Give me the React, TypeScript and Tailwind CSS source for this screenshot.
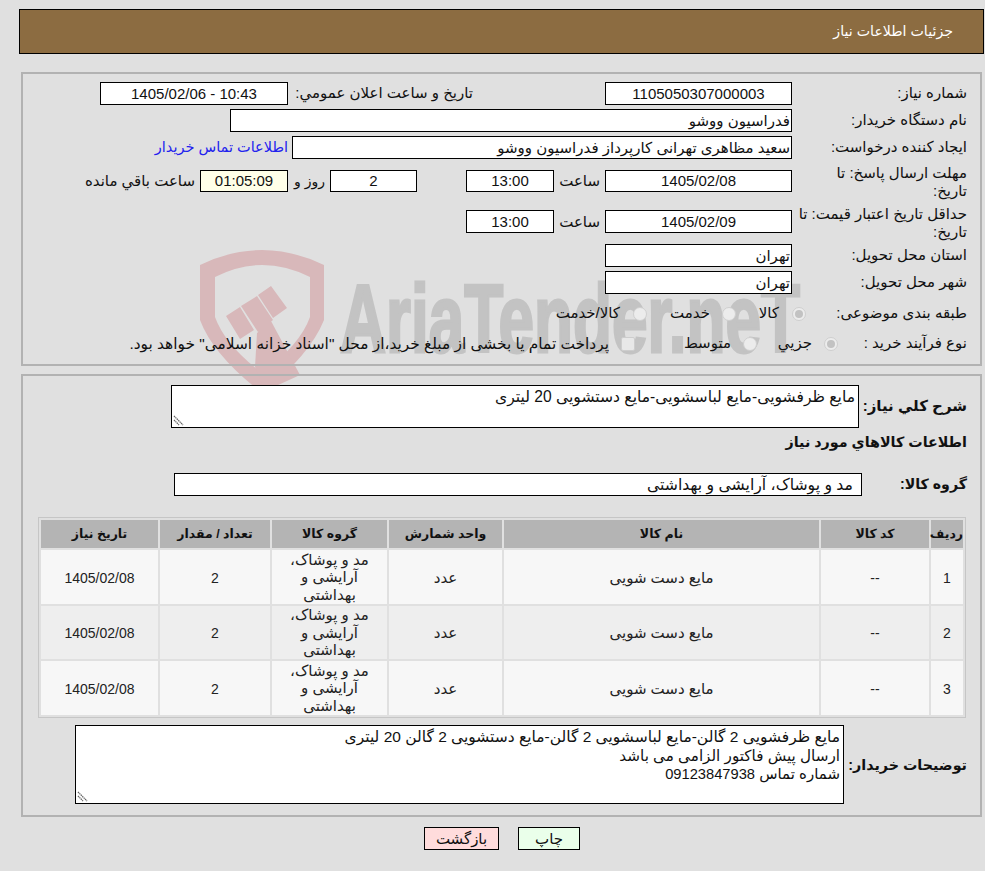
import React from "react";

function Field({
  className,
  children,
  h = "h-[23px] leading-[21px]",
  bg = "bg-white",
}: {
  className: string;
  children?: React.ReactNode;
  h?: string;
  bg?: string;
}) {
  return (
    <div className={"shrink-0 border border-black whitespace-nowrap text-[#111] " + h + " " + bg + " " + className}>
      {children}
    </div>
  );
}

function Radio({ on }: { on?: boolean }) {
  return (
    <span className="inline-flex h-[14px] w-[14px] shrink-0 items-center justify-center rounded-full border border-[#cfcfcf] bg-[#ececec]">
      {on && <span className="h-[8px] w-[8px] rounded-full bg-[#c2c2c2]" />}
    </span>
  );
}

function Resize() {
  return (
    <svg className="absolute bottom-[1px] left-[1px]" width="11" height="11" viewBox="0 0 11 11">
      <path d="M1 1L10 10M1 5L6 10" stroke="#666" strokeWidth="1.3" strokeDasharray="1.4 0.6" fill="none" />
    </svg>
  );
}

function Watermark() {
  return (
    <svg className="pointer-events-none absolute left-[195px] top-[245px] [direction:ltr]" width="640" height="150" viewBox="0 0 640 150">
      <path
        d="M5 20 Q67 -10 129 20 L129 75 Q115 110 67 148 Q18 110 5 75 Z M20 32 Q67 8 115 32 L115 72 Q105 100 67 128 Q30 100 20 72 Z"
        fill="#d8b8ba"
        fillRule="evenodd"
      />
      <path
        d="M31 71L45 62L59 85L45 94Z M46 61L62 51L78 75L63 87Z M63 50L76 41L92 63L78 73Z M62 88L76 76L105 130L70 146L60 122Z"
        fill="#d8b8ba"
      />
      <text
        x="145"
        y="107"
        direction="ltr"
        fill="#c3c3c3"
        stroke="#c3c3c3"
        strokeWidth="3"
        fontFamily="'Liberation Sans', sans-serif"
        fontWeight="700"
        fontSize="96"
        textLength="460"
        lengthAdjust="spacingAndGlyphs"
      >
        AriaTender.neT
      </text>
    </svg>
  );
}

const rows = [
  { n: "1", bg: "bg-[#f7f7f7]", h: "h-[54px]" },
  { n: "2", bg: "bg-[#eeeeee]", h: "h-[53px]" },
  { n: "3", bg: "bg-[#f7f7f7]", h: "h-[54px]" },
];

const th = "bg-[#b4b4b4] p-0 text-center text-[12.5px] font-bold text-[#111]";
const td = "p-0 pt-[2px] text-center text-[#222]";

export default function App() {
  return (
    <div
      dir="rtl"
      className="relative h-[871px] w-[985px] overflow-hidden bg-[#e0e0e0] font-['Liberation_Sans','DejaVu_Sans',sans-serif] text-[15px] text-[#111]"
    >
      <Watermark />
      <div className="relative pt-[9px]">
        <div className="mr-px ml-[19px] flex h-[45px] items-center border border-black bg-[#8c6c41] pr-[30px] text-[14.2px] text-white">
          جزئیات اطلاعات نیاز
        </div>

        <section className="mt-[18px] mr-[3px] ml-[21px] h-[294px] border-2 border-[#b2b2b2] pt-[8px] pr-[13px]">
          <div className="flex h-[23px] items-center">
            <div className="w-[175px] shrink-0">شماره نیاز:</div>
            <Field className="w-[187px] text-center">1105050307000003</Field>
            <div className="mr-[132px] w-[185px] shrink-0 whitespace-nowrap">تاریخ و ساعت اعلان عمومي:</div>
            <Field className="w-[188px] text-center">
              <span dir="ltr">1405/02/06 - 10:43</span>
            </Field>
          </div>

          <div className="mt-[4px] flex h-[23px] items-center">
            <div className="w-[175px] shrink-0">نام دستگاه خریدار:</div>
            <Field className="w-[562px] pr-[1px]">فدراسیون ووشو</Field>
          </div>

          <div className="mt-[4px] flex h-[23px] items-center">
            <div className="w-[175px] shrink-0">ایجاد کننده درخواست:</div>
            <Field className="w-[500px] pr-[1px]">سعید مظاهری تهرانی کارپرداز فدراسیون ووشو</Field>
            <a className="mr-[4px] text-[14.5px] whitespace-nowrap text-[#2222ee]">اطلاعات تماس خریدار</a>
          </div>

          <div className="mt-[11px] flex h-[22px] items-start">
            <div className="mt-[-6px] w-[175px] shrink-0 leading-[18px]">
              مهلت ارسال پاسخ: تا
              <br />
              تاریخ:
            </div>
            <Field h="h-[22px] leading-[20px]" className="w-[187px] text-center">1405/02/08</Field>
            <div className="w-[51px] shrink-0 pr-[5px] leading-[22px]">ساعت</div>
            <Field h="h-[22px] leading-[20px]" className="w-[88px] text-center">13:00</Field>
            <div className="w-[49px] shrink-0" />
            <Field h="h-[22px] leading-[20px]" className="w-[87px] text-center">2</Field>
            <div className="w-[42px] shrink-0 pr-[5px] text-[14px] leading-[22px]">روز و</div>
            <Field h="h-[22px] leading-[20px]" bg="bg-[#ffffe8]" className="w-[88px] text-center">01:05:09</Field>
            <div className="mr-[5px] whitespace-nowrap leading-[22px]">ساعت باقي مانده</div>
          </div>

          <div className="mt-[18px] flex h-[23px] items-start">
            <div className="mt-[-5px] w-[175px] shrink-0 leading-[18px] whitespace-nowrap">
              حداقل تاریخ اعتبار قیمت: تا
              <br />
              تاریخ:
            </div>
            <Field className="w-[187px] text-center">1405/02/09</Field>
            <div className="w-[51px] shrink-0 pr-[5px] leading-[23px]">ساعت</div>
            <Field className="w-[88px] text-center">13:00</Field>
          </div>

          <div className="mt-[11px] flex h-[23px] items-center">
            <div className="w-[175px] shrink-0">استان محل تحویل:</div>
            <Field className="w-[187px] pr-[1px]">تهران</Field>
          </div>

          <div className="mt-[4px] flex h-[23px] items-center">
            <div className="w-[175px] shrink-0">شهر محل تحویل:</div>
            <Field className="w-[187px] pr-[1px]">تهران</Field>
          </div>

          <div className="mt-[8px] flex h-[23px] items-center">
            <div className="w-[161px] shrink-0 whitespace-nowrap">طبقه بندی موضوعی:</div>
            <Radio on />
            <div className="w-[56px] shrink-0 pr-[13px]">کالا</div>
            <Radio />
            <div className="w-[75px] shrink-0 pr-[12px]">خدمت</div>
            <Radio />
            <div className="mr-[13px] whitespace-nowrap">کالا/خدمت</div>
          </div>

          <div className="mt-[7px] flex h-[23px] items-center">
            <div className="w-[129px] shrink-0 whitespace-nowrap">نوع فرآیند خرید :</div>
            <Radio on />
            <div className="w-[67px] shrink-0 pr-[12px]">جزيي</div>
            <Radio />
            <div className="w-[108px] shrink-0 pr-[12px]">متوسط</div>
            <span className="h-[14px] w-[14px] shrink-0 rounded-[2px] border border-[#cdcdcd] bg-[#e8e8e8]" />
            <div className="mr-[12px] text-[15.4px] whitespace-nowrap">پرداخت تمام یا بخشی از مبلغ خرید،از محل "اسناد خزانه اسلامی" خواهد بود.</div>
          </div>
        </section>

        <section className="mt-[8px] mr-[3px] ml-[21px] h-[443px] border-2 border-[#b2b2b2] pt-[9px] pr-[13px]">
          <div className="flex h-[43px] items-center">
            <div className="w-[108px] shrink-0 text-[15px] font-bold whitespace-nowrap">شرح کلي نیاز:</div>
            <div className="relative h-[43px] w-[688px] shrink-0 border border-black bg-white pt-[2px] pr-[3px] text-[15.6px] leading-[18px] whitespace-nowrap">
              مایع ظرفشویی-مایع لباسشویی-مایع دستشویی 20 لیتری
              <Resize />
            </div>
          </div>

          <div className="mt-[4px] flex h-[22px] items-center text-[14.3px] font-bold">اطلاعات کالاهاي مورد نیاز</div>

          <div className="mt-[19px] flex h-[23px] items-center">
            <div className="w-[105px] shrink-0 text-[14.2px] font-bold">گروه کالا:</div>
            <Field className="w-[688px] pr-[8px] text-[15.7px]">مد و پوشاک، آرایشی و بهداشتی</Field>
          </div>

          <table className="mt-[21px] mr-px w-[928px] table-fixed border-separate border-spacing-[2px] border border-[#c6c6c6]">
            <colgroup>
              <col className="w-[32px]" />
              <col className="w-[108px]" />
              <col className="w-[315px]" />
              <col className="w-[113px]" />
              <col className="w-[115px]" />
              <col className="w-[110px]" />
              <col className="w-[117px]" />
            </colgroup>
            <thead>
              <tr className="h-[28px]">
                <th className={th}>ردیف</th>
                <th className={th}>کد کالا</th>
                <th className={th}>نام کالا</th>
                <th className={th}>واحد شمارش</th>
                <th className={th}>گروه کالا</th>
                <th className={th}>تعداد / مقدار</th>
                <th className={th}>تاریخ نیاز</th>
              </tr>
            </thead>
            <tbody>
              {rows.map((r) => (
                <tr key={r.n} className={r.h}>
                  <td className={td + " text-[14px] " + r.bg}>{r.n}</td>
                  <td className={td + " text-[14px] " + r.bg}>--</td>
                  <td className={td + " " + r.bg}>مایع دست شویی</td>
                  <td className={td + " " + r.bg}>عدد</td>
                  <td className={"p-0 px-[10px] text-center leading-[17.5px] text-[#222] " + r.bg}>مد و پوشاک، آرایشی و بهداشتی</td>
                  <td className={td + " text-[14px] " + r.bg}>2</td>
                  <td className={td + " text-[14px] " + r.bg}>1405/02/08</td>
                </tr>
              ))}
            </tbody>
          </table>

          <div className="mt-[7px] flex h-[79px] items-center">
            <div className="mt-[3px] w-[123px] shrink-0 text-[14.3px] font-bold whitespace-nowrap">توضیحات خریدار:</div>
            <div className="relative h-[79px] w-[769px] shrink-0 border border-black bg-white pt-[2px] pr-[3px] text-[15.5px] leading-[18.5px] whitespace-nowrap">
              مایع ظرفشویی 2 گالن-مایع لباسشویی 2 گالن-مایع دستشویی 2 گالن 20 لیتری
              <br />
              <span className="text-[15.2px]">ارسال پیش فاکتور الزامی می باشد</span>
              <br />
              <span className="text-[15px]">شماره تماس </span>
              <span className="text-[14.7px]">09123847938</span>
              <Resize />
            </div>
          </div>
        </section>

        <div className="mt-[10px] mr-[405px] flex gap-[19px]">
          <button className="h-[23px] w-[62px] border border-black bg-[#eaffea] text-[15px]">چاپ</button>
          <button className="h-[23px] w-[75px] border border-black bg-[#ffdcdc] text-[15px]">بازگشت</button>
        </div>
      </div>
    </div>
  );
}
